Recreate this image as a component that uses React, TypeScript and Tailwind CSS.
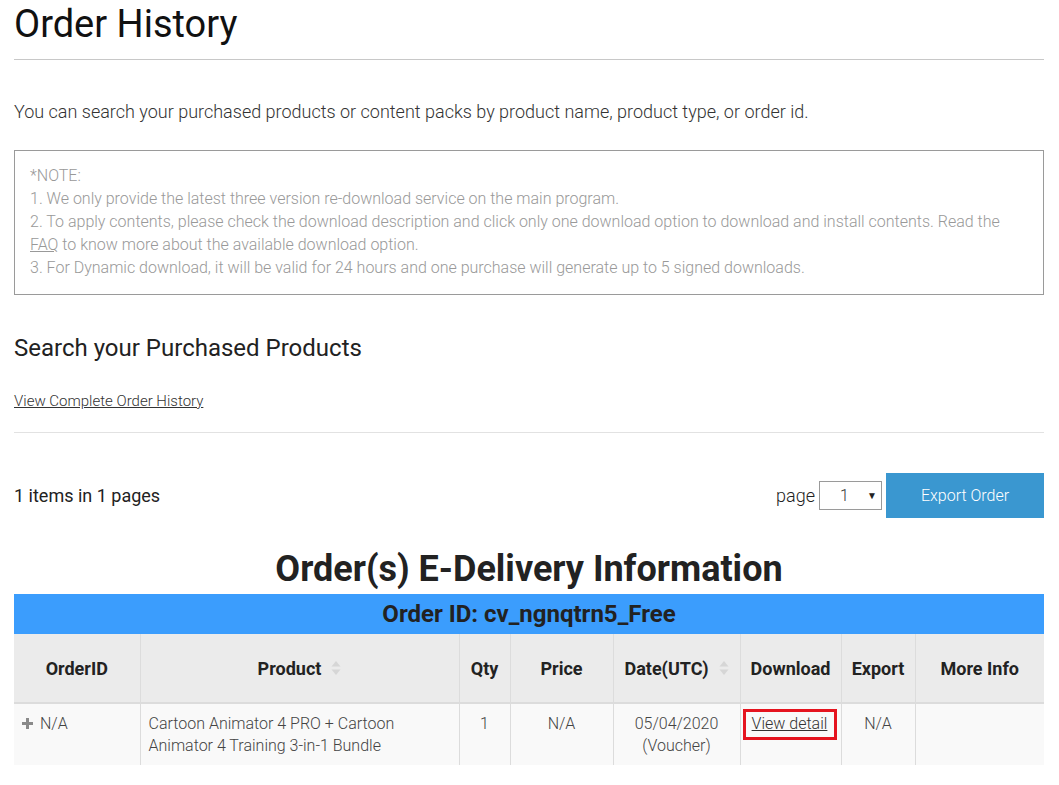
import React from 'react'

function SortIcon() {
  return (
    <svg width="10" height="16" viewBox="0 0 10 16" className="inline-block ml-[10px] -mt-[3px] align-middle">
      <path d="M5 1 L9.5 6.5 H0.5 Z" fill="#d6d6d6" />
      <path d="M5 15 L9.5 9.5 H0.5 Z" fill="#d6d6d6" />
    </svg>
  )
}

function PlusIcon() {
  return (
    <svg width="11" height="11" viewBox="0 0 11 11" className="inline-block mr-[7px] -mt-[3px] align-middle">
      <rect x="4" y="0" width="3" height="11" fill="#8a8a8a" />
      <rect x="0" y="4" width="11" height="3" fill="#8a8a8a" />
    </svg>
  )
}

const headers: { label: string; width: string; sort?: boolean }[] = [
  { label: 'OrderID', width: 'w-[126px]' },
  { label: 'Product', width: 'w-[319px]', sort: true },
  { label: 'Qty', width: 'w-[51px]' },
  { label: 'Price', width: 'w-[103px]' },
  { label: 'Date(UTC)', width: 'w-[127px]', sort: true },
  { label: 'Download', width: 'w-[101px]' },
  { label: 'Export', width: 'w-[74px]' },
  { label: 'More Info', width: 'w-[129px]' },
]

export default function App() {
  return (
    <div className="bg-white min-h-[785px] px-[14px] pr-[15px] font-['Roboto',sans-serif] text-[#333]">
      <h1 className="text-[38px] leading-[46px] pt-[1px] text-[#111] font-normal">Order History</h1>
      <div className="mt-[12px] h-px bg-[#c8c8c8]" />

      <p className="mt-[40px] text-[18px] leading-[24px] font-light text-[#333]">
        You can search your purchased products or content packs by product name, product type, or order id.
      </p>

      <div className="mt-[26px] border border-[#9a9a9a] px-[15px] pt-[13px] pb-[15px] text-[16px] leading-[23px] font-light text-[#999]">
        <div>*NOTE:</div>
        <div>1. We only provide the latest three version re-download service on the main program.</div>
        <div>
          2. To apply contents, please check the download description and click only one download option to download and install contents. Read the{' '}
          <a href="#" className="underline text-[#999]">FAQ</a> to know more about the available download option.
        </div>
        <div>3. For Dynamic download, it will be valid for 24 hours and one purchase will generate up to 5 signed downloads.</div>
      </div>

      <h2 className="mt-[38px] text-[24px] leading-[30px] text-[#222] font-normal">Search your Purchased Products</h2>

      <a href="#" className="block mt-[29px] text-[15px] leading-[18px] font-light underline text-[#333] w-fit">
        View Complete Order History
      </a>

      <div className="mt-[22px] h-px bg-[#e2e2e2]" />

      <div className="mt-[40px] flex items-center justify-between">
        <div className="text-[18px] text-[#222]">1 items in 1 pages</div>
        <div className="flex items-center">
          <span className="text-[18px] font-light text-[#222] mr-[4px]">page</span>
          <div className="w-[63px] h-[29px] border border-[#9a9a9a] flex items-center justify-between pl-[20px] pr-[4px] text-[16px] font-light text-[#333]">
            <span>1</span>
            <span className="text-[10px] text-[#222]">▼</span>
          </div>
          <button className="ml-[4px] w-[158px] h-[45px] bg-[#3a97d0] text-white text-[16px] font-light">Export Order</button>
        </div>
      </div>

      <h2 className="mt-[30px] text-center text-[36px] leading-[42px] font-bold text-[#222]">
        Order(s) E-Delivery Information
      </h2>

      <div className="mt-[4px] h-[40px] bg-[#3b9dfd] flex items-center justify-center text-[24px] font-bold text-[#222]">
        Order ID: cv_ngnqtrn5_Free
      </div>

      <table className="w-full table-fixed border-collapse">
        <thead>
          <tr className="bg-[#ebebeb] h-[69px]">
            {headers.map((h, i) => (
              <th
                key={h.label}
                className={`${h.width} text-[18px] font-bold text-[#222] text-center border-b-2 border-b-[#dcdcdc] ${i > 0 ? 'border-l border-l-[#dcdcdc]' : ''}`}
              >
                {h.label}
                {h.sort && <SortIcon />}
              </th>
            ))}
          </tr>
        </thead>
        <tbody>
          <tr className="bg-[#f9f9f9] h-[62px] align-top text-[16px] leading-[22px] font-light text-[#444]">
            <td className="pt-[9px] pl-[8px]">
              <PlusIcon />
              N/A
            </td>
            <td className="pt-[9px] px-[8px] border-l border-l-[#dcdcdc]">
              Cartoon Animator 4 PRO + Cartoon Animator 4 Training 3-in-1 Bundle
            </td>
            <td className="pt-[9px] text-center border-l border-l-[#dcdcdc]">1</td>
            <td className="pt-[9px] text-center border-l border-l-[#dcdcdc]">N/A</td>
            <td className="pt-[9px] text-center border-l border-l-[#dcdcdc]">
              05/04/2020
              <br />
              (Voucher)
            </td>
            <td className="pt-[5px] border-l border-l-[#dcdcdc]">
              <div className="ml-[2px] w-[94px] h-[31px] border-[3px] border-[#e5141f] flex items-start justify-center pt-[1px]">
                <a href="#" className="underline text-[#333]">View detail</a>
              </div>
            </td>
            <td className="pt-[9px] text-center border-l border-l-[#dcdcdc]">N/A</td>
            <td className="border-l border-l-[#dcdcdc]"></td>
          </tr>
        </tbody>
      </table>
    </div>
  )
}
